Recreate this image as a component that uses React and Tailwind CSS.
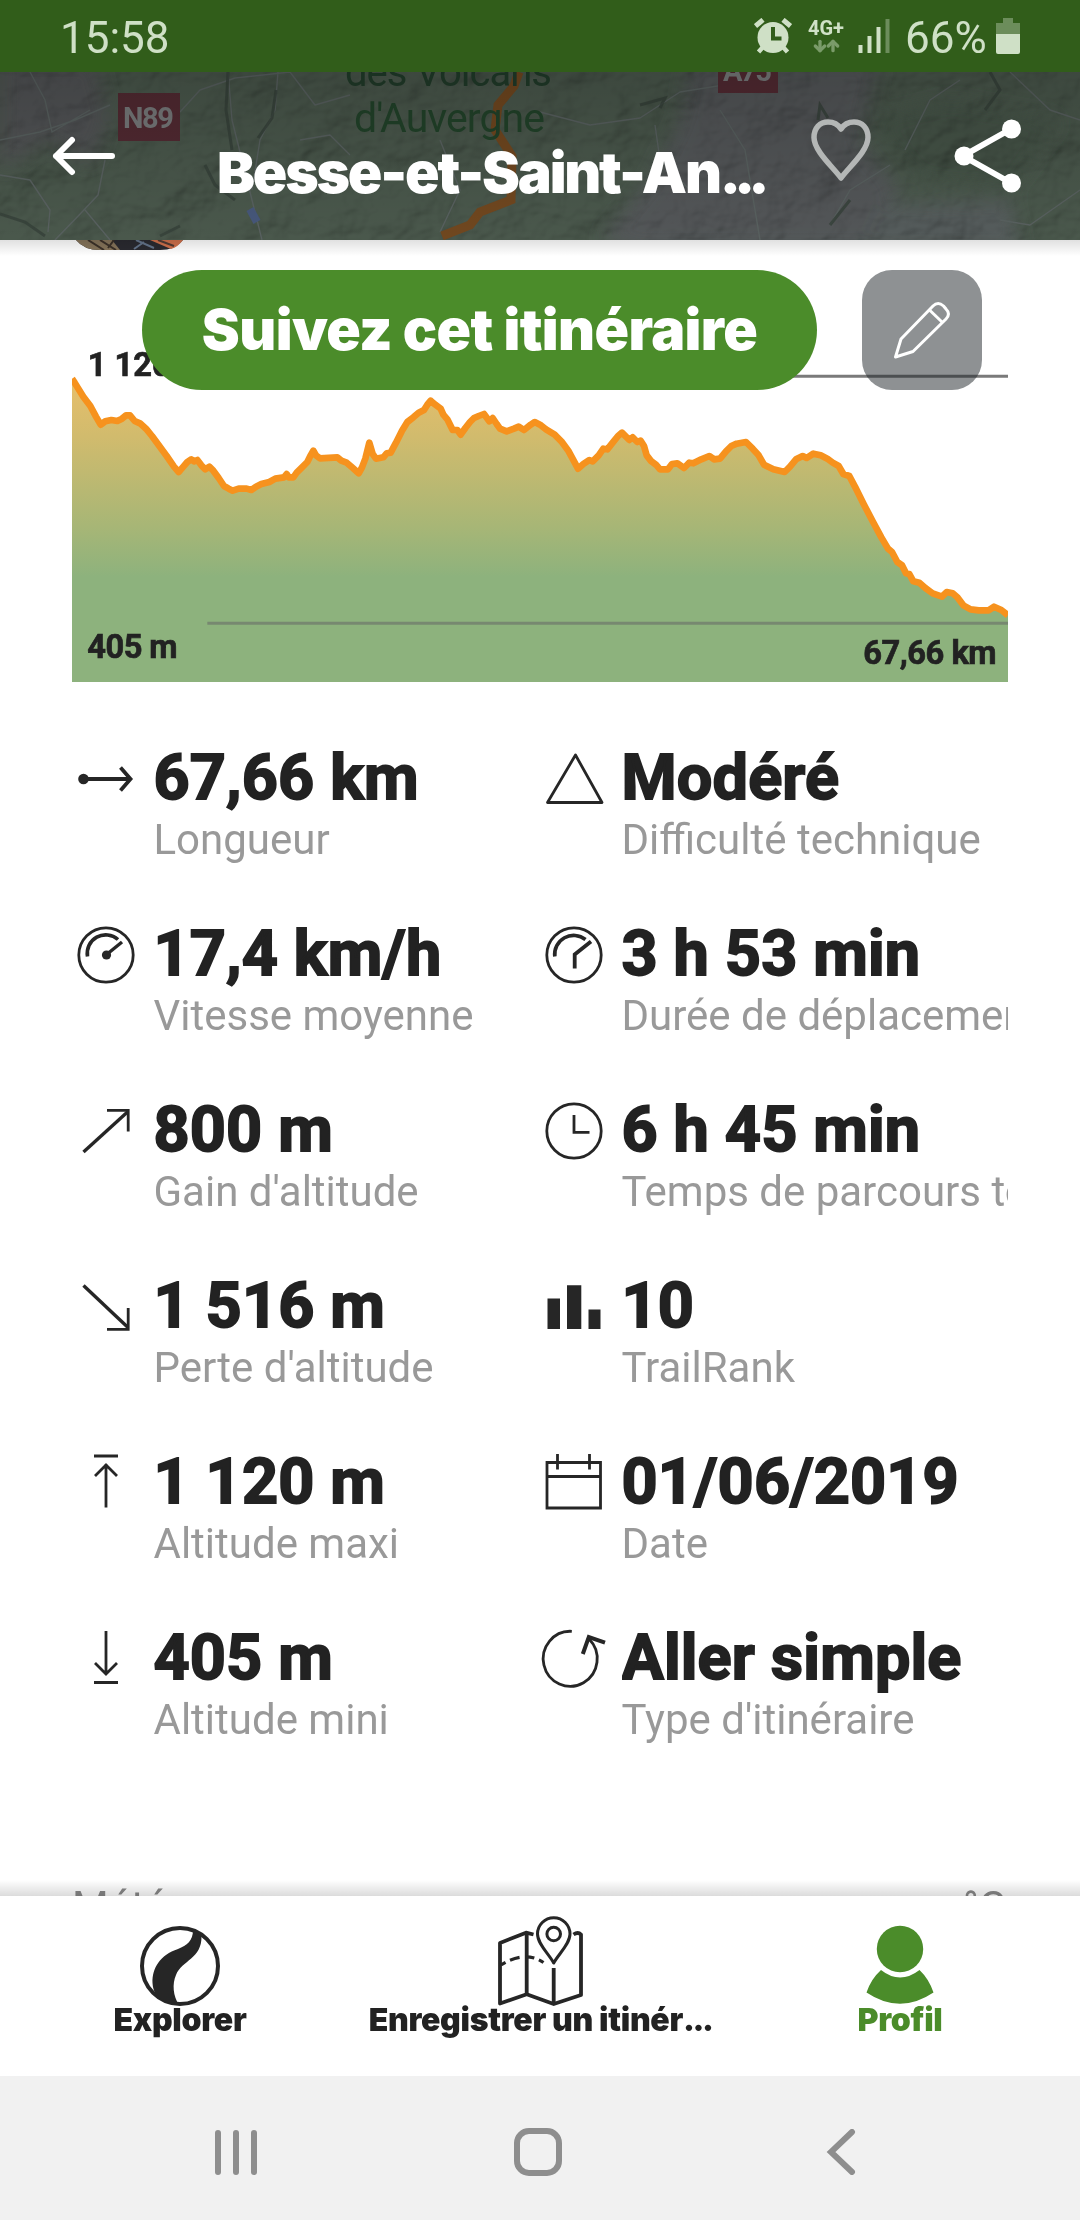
import {
  ArrowDown,
  ArrowUp
} from "lucide-react";

/* ─── Elevation samples (x, y) ─── */
const ELEVATION = [
  [0, 416], [8, 428], [34, 470], [55, 498], [72, 530], [86, 554], [100, 544], [118, 540], [136, 543],
  [150, 536], [162, 526], [174, 526], [188, 543], [204, 550], [222, 566], [240, 588], [262, 618],
  [284, 648], [306, 680], [320, 696], [334, 680], [346, 666], [358, 658], [366, 664], [376, 660],
  [388, 676], [400, 688], [412, 680], [424, 692], [440, 714], [456, 738], [470, 746], [482, 752],
  [500, 746], [524, 746], [538, 750], [552, 740], [568, 732], [592, 726], [610, 716], [636, 712],
  [644, 702], [650, 712], [664, 712], [674, 698], [690, 682], [706, 666], [716, 646], [724, 632],
  [732, 646], [744, 655], [796, 652], [808, 662], [824, 668], [840, 682], [860, 700], [870, 682],
  [880, 656], [892, 608], [902, 642], [912, 656], [934, 652], [944, 640], [956, 638], [972, 608],
  [990, 572], [1006, 546], [1024, 532], [1040, 518], [1056, 510], [1066, 494], [1076, 482],
  [1090, 494], [1106, 506], [1114, 524], [1126, 538], [1142, 570], [1156, 570], [1166, 584],
  [1180, 564], [1194, 546], [1206, 534], [1220, 528], [1236, 522], [1252, 544], [1262, 534],
  [1274, 552], [1284, 566], [1304, 574], [1326, 566], [1340, 560], [1356, 570], [1376, 554],
  [1388, 546], [1404, 554], [1422, 568], [1448, 584], [1468, 604], [1490, 634], [1518, 686],
  [1534, 672], [1552, 660], [1562, 664], [1580, 646], [1594, 626], [1606, 628], [1622, 608],
  [1638, 588], [1650, 578], [1662, 590], [1672, 600], [1682, 592], [1696, 606], [1706, 602],
  [1716, 618], [1724, 646], [1738, 664], [1752, 674], [1764, 688], [1788, 688], [1800, 672],
  [1816, 670], [1836, 684], [1852, 668], [1864, 670], [1888, 658], [1912, 648], [1926, 658],
  [1944, 656], [1962, 634], [1978, 618], [1994, 611], [2022, 606], [2042, 626], [2060, 646],
  [2076, 674], [2104, 688], [2138, 696], [2154, 680], [2172, 658], [2192, 648], [2204, 654],
  [2224, 641], [2246, 646], [2266, 656], [2282, 668], [2300, 678], [2314, 702], [2332, 708],
  [2350, 742], [2376, 794], [2402, 844], [2428, 892], [2448, 926], [2460, 936], [2476, 966],
  [2490, 976], [2502, 1000], [2512, 1002], [2524, 1024], [2542, 1028], [2560, 1044], [2582, 1060],
  [2610, 1070], [2624, 1056], [2642, 1060], [2656, 1072], [2674, 1096], [2696, 1108], [2720, 1111],
  [2750, 1111], [2766, 1100], [2788, 1110], [2808, 1126],
];

const LINE = ELEVATION.map(([x, y]) => `${x},${y}`).join(" ");

/* ─── Stat icons, all on a 64x64 grid ─── */
function StatIcon({ children }) {
  return (
    <svg
      viewBox="0 0 64 64"
      className="w-16 h-16 shrink-0 overflow-visible"
      fill="none"
      stroke="#262626"
      strokeWidth="2.8"
    >
      {children}
    </svg>
  );
}

const ICONS = {
  length: (
    <>
      <circle cx="9.5" cy="32" r="5.3" fill="#262626" stroke="none" />
      <path d="M10 32H56" strokeWidth="3.8" />
      <path d="M46.5 20.5 56.5 32 46.5 43.5" strokeWidth="3.8" />
    </>
  ),
  speed: (
    <>
      <circle cx="32" cy="32" r="27.2" />
      <path d="M13.5 33.5A18.5 18.5 0 0 1 44 16.5" strokeWidth="3.6" />
      <path d="M32 32 48 19" strokeWidth="3.4" />
      <circle cx="32.5" cy="32" r="4.6" fill="#262626" stroke="none" />
    </>
  ),
  up: (
    <>
      <path d="M9.5 53 54 12.5" strokeWidth="3.4" />
      <path d="M33 11.3H54.2V32.5" />
    </>
  ),
  down: (
    <>
      <path d="M9.5 10.5 54 52.5" strokeWidth="3.4" />
      <path d="M33 54.3H54.2V33" />
    </>
  ),
  max: <path d="M20 5H44M32 13V56.5M21 25 32 14 43 25" />,
  min: <path d="M20 55.5H44M32 4V47M21 36 32 47 43 36" />,
  difficulty: <path d="M33.5 8 60 55.5H5.5Z" strokeLinejoin="round" />,
  moving: (
    <>
      <circle cx="32" cy="32" r="27.2" />
      <path d="M12.8 33.5A19 19 0 0 1 43.5 16.5" strokeWidth="3.6" />
      <path d="M49 18.5 32.7 31.5V45.5" strokeWidth="3.8" />
    </>
  ),
  clock: (
    <>
      <circle cx="32" cy="32" r="27.2" />
      <path d="M32 16V33.3H47.5" />
    </>
  ),
  rank: (
    <path d="M5.5 23.5H18V54H5.5ZM25 10.3H39.3V54H25ZM46.5 34.5H58.5V54H46.5Z" fill="#262626" stroke="none" />
  ),
  date: <path d="M5 11.5H58.5V57H5ZM5 25.5H58.5M15.5 3V18.5M47.5 3V18.5" />,
  loop: (
    <>
      <path d="M29.8 4.3A27 27.5 0 1 0 47 12" />
      <path d="M40.8 27 46.8 10 63 15.7" strokeWidth="4" />
    </>
  ),
};

const STATS = [
  { icon: "length", value: "67,66 km", label: "Longueur" },
  { icon: "difficulty", value: "Modéré", label: "Difficulté technique" },
  { icon: "speed", value: "17,4 km/h", label: "Vitesse moyenne" },
  { icon: "moving", value: "3 h 53 min", label: "Durée de déplacement" },
  { icon: "up", value: "800 m", label: "Gain d'altitude" },
  { icon: "clock", value: "6 h 45 min", label: "Temps de parcours total" },
  { icon: "down", value: "1 516 m", label: "Perte d'altitude" },
  { icon: "rank", value: "10", label: "TrailRank" },
  { icon: "max", value: "1 120 m", label: "Altitude maxi" },
  { icon: "date", value: "01/06/2019", label: "Date" },
  { icon: "min", value: "405 m", label: "Altitude mini" },
  { icon: "loop", value: "Aller simple", label: "Type d'itinéraire" },
];

/* ─── Android status bar ─── */
function StatusBar() {
  return (
    <div className="flex h-[72px] shrink-0 items-center bg-[#315d1a] pl-[60px] pr-[60px] text-[#cfe0c6]">
      <span className="text-[44px] leading-[72px] pt-[3px]">15:58</span>
      <svg viewBox="0 0 38 36" className="ml-auto h-9 w-[38px]" fill="none" stroke="#cfe0c6">
        <circle cx="19" cy="19.5" r="15.5" fill="#cfe0c6" stroke="none" />
        <path d="M1.5 8 9 1.8M36.5 8 29 1.8" strokeWidth="5" />
        <path d="M9 29 4.5 34M29 29 33.5 34" strokeWidth="4.5" />
        <path d="M19 9V20.5H27.5" stroke="#315d1a" strokeWidth="4" />
      </svg>
      <div className="ml-4 flex w-[36px] flex-col items-center">
        <span className="text-[20px] font-bold leading-[20px]">4G+</span>
        <div className="flex h-[17px] items-center text-[#7a9b69]">
          <ArrowDown className="-mr-[3px] h-[18px] w-4" strokeWidth={5} />
          <ArrowUp className="h-[18px] w-4" strokeWidth={5} />
        </div>
      </div>
      <svg viewBox="0 0 32 34" className="ml-[14px] h-[34px] w-8" stroke="#cfe0c6" strokeWidth="4">
        <path d="M2.5 26V34M11.5 17V34M20.5 8V34" />
        <path d="M29.5 0V34" stroke="#6c8d5b" />
      </svg>
      <span className="ml-[15px] w-[84px] text-[44px] leading-[72px] pt-[3px]">66%</span>
      <svg viewBox="0 0 24 36" className="ml-[7px] h-9 w-6">
        <path d="M7 0H17V5H24V16H0V5H7Z" fill="#6c8d5b" />
        <path d="M0 16H24V34Q24 36 22 36H2Q0 36 0 34Z" fill="#cfe0c6" />
      </svg>
    </div>
  );
}

/* ─── Dimmed terrain map behind the header ─── */
function TerrainMap() {
  return (
    <svg viewBox="0 72 1080 168" className="absolute inset-0 h-full w-full" fill="none">
      <defs>
        <filter id="relief" x="0" y="0" width="100%" height="100%">
          <feTurbulence type="fractalNoise" baseFrequency="0.016 0.02" numOctaves="4" seed="8" />
          <feDiffuseLighting surfaceScale="14" diffuseConstant="1.1" lightingColor="#ffffff">
            <feDistantLight azimuth="225" elevation="52" />
          </feDiffuseLighting>
        </filter>
        <filter id="soft"><feGaussianBlur stdDeviation="9" /></filter>
        <linearGradient id="shade" x1="0" y1="0" x2="0" y2="1">
          <stop offset="0" stopColor="#000" stopOpacity="0.18" />
          <stop offset="1" stopColor="#000" stopOpacity="0" />
        </linearGradient>
      </defs>
      <rect y="72" width="1080" height="168" fill="#4a584c" />
      <g filter="url(#soft)">
        <path d="M0 60H95L110 120 90 165 50 140 0 170Z" fill="#515355" />
        <path d="M690 60H880L860 140 900 190 860 250H640L600 240 650 180 680 120Z" fill="#525759" />
        <path d="M880 205 1010 200 1020 250H860Z" fill="#555b5c" />
        <path d="M870 120 950 100 1060 120 1010 190 920 180Z" fill="#455347" />
      </g>
      <rect y="72" width="1080" height="168" filter="url(#relief)" opacity="0.34" className="mix-blend-multiply" />
      <g stroke="#58605f" strokeWidth="1.4" strokeLinejoin="round">
        <path d="M0 140 40 132 75 120 110 105M30 72 45 100 52 132 90 110M0 175 30 180 50 210 48 232M105 160 98 195 82 212 55 240M85 210 110 240" />
        <path d="M228 72 232 120 242 160 252 200 262 240M278 72 275 110 260 140 252 190M180 112 200 90 235 78 290 72 315 105 350 95" />
        <path d="M540 112 590 125 640 118 680 92 730 84M655 125 660 160 690 190M720 110 745 150 760 240M890 165 850 190 830 225M905 150 930 100 960 80M1010 72 1050 110 1080 120M1000 220 1030 225 1080 190M440 140 460 190 440 232M300 140 330 135 350 155" />
      </g>
      <g stroke="#354038" strokeWidth="3" opacity="0.8">
        <path d="M228 72 226 110 232 150M276 90 272 118 258 138M205 165 215 185 235 200M0 214 25 222 45 236M160 236 180 226" />
        <path d="M640 105 665 98 660 108M818 120 820 105 828 118M990 72 1000 90 985 110M830 225 850 200" />
      </g>
      <path d="M519 72 514 86 498 105 495 130 512 156 511 200 480 212 470 225 442 236" stroke="#70471f" strokeWidth="9" />
      <path d="M250 209 257 222" stroke="#46577a" strokeWidth="8" />
      <g fontFamily="Roboto, sans-serif">
        <text x="345" y="86" fontSize="40" textLength="207" fill="#203b29">des Volcans</text>
        <text x="354" y="132" fontSize="41" textLength="191" fill="#214229">d'Auvergne</text>
        <rect x="118" y="93" width="62" height="48" fill="#522a32" />
        <text x="123" y="128" fontSize="29" fontWeight="700" textLength="51" fill="#77797a">N89</text>
        <rect x="718" y="70" width="60" height="23" fill="#522a32" />
        <text x="723" y="81" fontSize="29" fontWeight="700" textLength="49" fill="#77797a">A75</text>
      </g>
      <rect y="72" width="1080" height="168" fill="url(#shade)" />
    </svg>
  );
}

function Header() {
  return (
    <header className="relative h-[168px] shrink-0 overflow-hidden">
      <TerrainMap />
      <div className="relative flex h-full items-start pl-[52px] pr-[58px]">
        <svg viewBox="0 0 64 40" className="mt-16 h-10 w-16" fill="none" stroke="#fff" strokeWidth="6" strokeLinecap="round" strokeLinejoin="round">
          <path d="M60 20H4M20 4 4 20 20 36" />
        </svg>
        <h1 className="ml-[101px] mt-[65px] w-[560px] whitespace-nowrap font-[Inter,sans-serif] text-[57px] font-black leading-[72px] tracking-[-2.2px] text-white">
          Besse-et-Saint-An<span className="tracking-[-7px]">...</span>
        </h1>
        <svg viewBox="0 0 62 64" className="ml-[33px] mt-[46px] h-16 w-[62px]" fill="none" stroke="#b4b7b6" strokeWidth="5.5" strokeLinejoin="round">
          <path d="M31 60C24 50 4 33 4 19.5 4 10 10 4 18 4 24 4 28.5 7 31 11 33.5 7 38 4 44 4 52 4 58 10 58 19.5 58 33 38 50 31 60Z" />
        </svg>
        <svg viewBox="0 0 68 76" className="ml-auto mt-[46px] h-[76px] w-[68px]" stroke="#fff" strokeWidth="6" fill="none">
          <path d="M57 11 9 38 57 65" />
          <g fill="#fff" stroke="none">
            <circle cx="57.5" cy="11" r="9.5" />
            <circle cx="10" cy="38" r="9.5" />
            <circle cx="57.5" cy="65" r="9.5" />
          </g>
        </svg>
      </div>
    </header>
  );
}

/* ─── Elevation profile ─── */
function ElevationChart() {
  return (
    <svg viewBox="0 306 2808 1020" className="block h-[340px] w-full">
      <defs>
        <linearGradient id="ground" gradientUnits="userSpaceOnUse" x1="0" y1="410" x2="0" y2="1010">
          <stop offset="0" stopColor="#e9bf6b" />
          <stop offset="0.3" stopColor="#d1bb6d" />
          <stop offset="0.75" stopColor="#a7b676" />
          <stop offset="1" stopColor="#8db27d" />
        </linearGradient>
      </defs>
      <polygon points={`0,1326 ${LINE} 2808,1326`} fill="url(#ground)" />
      <polyline points={LINE} fill="none" stroke="#f6921e" strokeWidth="20" strokeLinejoin="round" />
      <path d="M456 409H2808" stroke="#7a7a7a" strokeWidth="9" />
      <path d="M406 1150H2808" stroke="#778870" strokeWidth="9" />
      <g fontFamily="Roboto, sans-serif" fontWeight="700" fontSize="98" fill="#222" stroke="#222" strokeWidth="2">
        <text x="47" y="409">1 120 m</text>
        <text x="46" y="1253" textLength="271">405 m</text>
        <text x="2774" y="1271" textAnchor="end" textLength="400">67,66 km</text>
      </g>
    </svg>
  );
}

function Stat({ icon, value, label }) {
  return (
    <div className="flex h-[176px] min-w-0">
      <div className="flex h-[72px] w-[81.5px] shrink-0 items-center pl-[1.5px]">
        <StatIcon>{ICONS[icon]}</StatIcon>
      </div>
      <div className="min-w-0 flex-1 overflow-hidden whitespace-nowrap">
        <div className="text-[63px] font-bold leading-[70px] tracking-[0.15px] text-[#222] [-webkit-text-stroke:1.8px_#222]">{value}</div>
        <div className="pt-[3px] text-[42px] leading-[48px] text-[#999]">{label}</div>
      </div>
    </div>
  );
}

/* ─── Bottom tabs ─── */
function TabBar() {
  return (
    <nav className="relative grid h-[180px] shrink-0 grid-cols-3 bg-white font-[Inter,sans-serif] text-[32px] font-black tracking-[-0.3px] text-[#222]">
      {/* soft shadow cast on the scrolling content */}
      <div className="absolute inset-x-0 -top-4 h-4 bg-linear-to-b from-black/0 to-black/14" />
      <div className="flex flex-col items-center pt-4">
        <svg viewBox="0 0 96 96" className="h-24 w-24 shrink-0">
          <circle cx="48" cy="54" r="38" fill="none" stroke="#262626" strokeWidth="4" />
          <path d="M61 18C61 29 55 33 46 37 28 43 20 56 20.5 71 21 80 25 85 30 88L47 93C41 84 40 72 44 63 50 48 70 47 69.5 24Z" fill="#262626" />
        </svg>
        <span className="leading-6">Explorer</span>
      </div>
      <div className="flex flex-col items-center pt-4">
        <svg viewBox="0 0 96 96" className="h-24 w-24 shrink-0" fill="none" stroke="#262626" strokeWidth="3.8" strokeLinejoin="round">
          <path d="M41.5 22.5 34 20.7 8 31V91.5L34.7 82.3 61.7 92 89 83V22.5Q86 19.5 81.5 22.5" />
          <path d="M34.7 21V82M61.7 56V92" />
          <path d="M61.7 51C57 42 45.5 32 45.5 22A16.2 16.2 0 0 1 78 22C78 32 66.5 42 61.7 51Z" strokeWidth="3" />
          <circle cx="61.7" cy="22" r="6.8" strokeWidth="3" />
          <path d="M9 53Q33 38 51.5 50.5" strokeWidth="3.2" strokeDasharray="5 5 10 6 9 5 9" />
        </svg>
        <span className="whitespace-nowrap leading-6">
          Enregistrer un itinér<span className="tracking-[-2.5px]">...</span>
        </span>
      </div>
      <div className="flex flex-col items-center pt-4 text-[#4b8c2a]">
        <svg viewBox="0 0 96 96" className="h-24 w-24 shrink-0" fill="currentColor">
          <circle cx="48" cy="37" r="23.2" />
          <path d="M29 58Q48 73 67.5 58 77 67 81.5 80.5 48 103 14.5 80.5 19 67 29 58Z" />
        </svg>
        <span className="leading-6">Profil</span>
      </div>
    </nav>
  );
}

/* ─── Android navigation buttons ─── */
function SystemNav() {
  return (
    <div className="flex h-36 shrink-0 items-center bg-[#f1f1f1] pl-[215px] pt-2">
      <div className="flex gap-3">
        <span className="h-[45px] w-[6px] rounded-full bg-[#8e8e8e]" />
        <span className="h-[45px] w-[6px] rounded-full bg-[#8e8e8e]" />
        <span className="h-[45px] w-[6px] rounded-full bg-[#8e8e8e]" />
      </div>
      <span className="ml-[257px] h-12 w-12 rounded-[15px] border-[6px] border-[#8e8e8e]" />
      <svg viewBox="0 0 30 46" className="ml-[264px] h-[46px] w-[30px]" fill="none" stroke="#8e8e8e" strokeWidth="6" strokeLinecap="round">
        <path d="M26 3 5 23 26 43" />
      </svg>
    </div>
  );
}

export default function App() {
  return (
    <div className="flex h-[2220px] w-[1080px] flex-col overflow-hidden bg-white font-[Roboto,sans-serif]">
      <StatusBar />
      <Header />

      <main className="relative min-h-0 flex-1 overflow-hidden px-[72px] pt-[102px]">
        {/* ── Author picture, scrolled mostly under the header ── */}
        <svg viewBox="0 0 112 10" className="absolute left-[74px] top-0 h-[10px] w-28">
          <path d="M2 0H109Q101 10 86 10H26Q10 10 2 0Z" fill="#2a2a30" />
          <path d="M2 0H38L46 10H26Q10 10 2 0Z" fill="#85745a" />
          <path d="M14 0 30 10M26 0 42 10M40 0 34 8" stroke="#3b3128" strokeWidth="2" />
          <path d="M62 0 80 8M70 2 60 9" stroke="#64748b" strokeWidth="2" />
          <path d="M76 0H109Q104 7 97 9Z" fill="#d0714c" />
          <path d="M84 0 100 6" stroke="#513b34" strokeWidth="2" />
        </svg>
        <div className="absolute inset-x-0 top-0 h-4 bg-linear-to-b from-black/12 to-black/0" />

        <ElevationChart />

        {/* ── Floating actions over the chart ── */}
        <div className="absolute left-[142px] top-[30px] flex gap-[45px]">
          <button className="h-[120px] w-[675px] whitespace-nowrap rounded-full bg-[#4b8c2a] font-[Inter,sans-serif] text-[57px] font-black tracking-[-0.6px] text-white">
            Suivez cet itinéraire
          </button>
          <button className="flex h-[120px] w-[120px] items-center justify-center rounded-[30px] bg-[#1d2327]/50">
            <svg viewBox="0 0 60 60" className="h-[60px] w-[60px]" fill="none" stroke="#fff" strokeWidth="3" strokeLinejoin="round">
              <path d="M3.5 57 9 39 41 6Q46 1 51.5 6L54 9Q59 14 54 19L21 51.5Z" />
              <path d="M37.5 10 50 22" />
            </svg>
          </button>
        </div>

        <section className="mt-[61px] grid grid-cols-2">
          {STATS.map((s) => (
            <Stat key={s.label} {...s} />
          ))}
        </section>

        <div className="mt-[84px] flex justify-between pr-[2px] text-[42px] leading-[48px] text-[#888]">
          <span>Météo</span>
          <span>°C</span>
        </div>
      </main>

      <TabBar />
      <SystemNav />
    </div>
  );
}
